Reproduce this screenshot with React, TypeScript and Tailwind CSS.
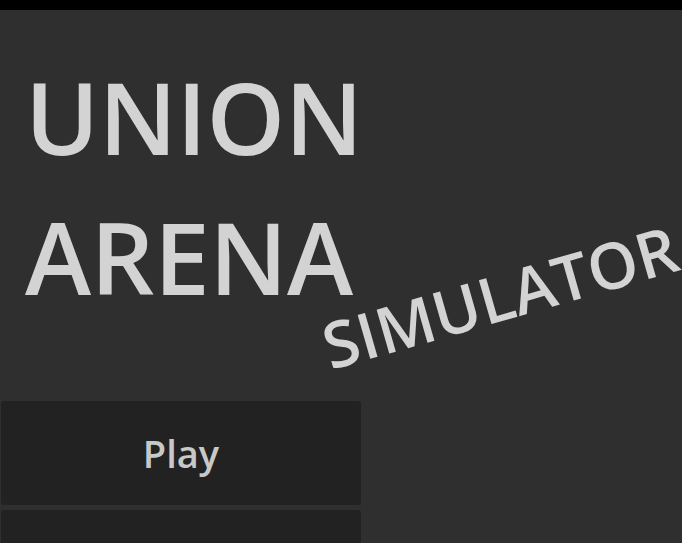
import React from "react";

export default function App() {
  return (
    <div
      className="relative w-[682px] h-[543px] overflow-hidden bg-[#2f2f2f] flex flex-col"
      style={{ fontFamily: '"Open Sans", sans-serif' }}
    >
      <div className="h-[10px] bg-black shrink-0" />
      <div className="pl-[25px] pt-[36px]">
        <h1 className="text-[100px] leading-[140px] font-semibold tracking-[-0.5px] text-[#d3d3d3] m-0">
          <div>UNION</div>
          <div>ARENA</div>
        </h1>
      </div>
      <div className="absolute left-[333px] top-[314px] origin-bottom-left -rotate-[16deg] text-[64px] leading-none font-semibold text-[#d3d3d3] whitespace-nowrap">
        SIMULATOR
      </div>
      <div className="mt-[75px] flex flex-col gap-[5px] w-[360px] ml-[1px]">
        <button className="h-[104px] rounded-[3px] bg-[#222222] text-[#c8c8c8] text-[38px] font-semibold">
          Play
        </button>
        <button className="h-[104px] rounded-[3px] bg-[#222222] text-[#c8c8c8] text-[38px] font-semibold">
          
        </button>
      </div>
    </div>
  );
}
